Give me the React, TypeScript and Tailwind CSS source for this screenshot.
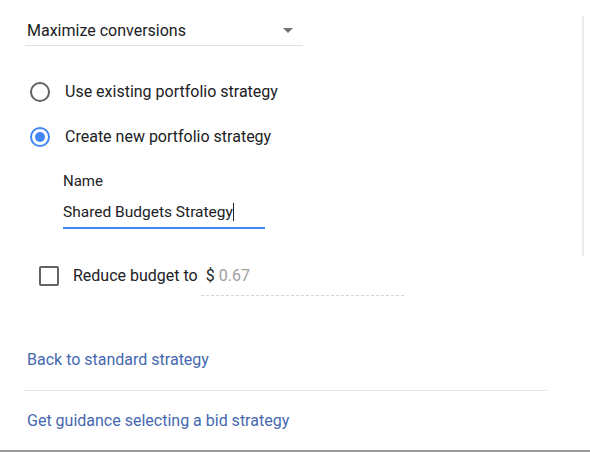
export default function App() {
  return (
    <div className="relative w-[590px] h-[452px] bg-white overflow-hidden font-['Roboto','Liberation_Sans',sans-serif] text-[#202124]">
      {/* right scroll edge */}
      <div className="absolute right-[6px] top-[16px] h-[240px] w-[2px] bg-[#ececec]" />

      <div className="pl-[25px] pt-[16px]">
        {/* strategy select */}
        <div className="flex items-center justify-between w-[278px] h-[30px] border-b border-[#e0e0e0] pl-[2px] pr-[10px]">
          <span className="text-[16px] leading-[24px]">Maximize conversions</span>
          <svg width="10" height="5" viewBox="0 0 10 5">
            <path d="M0 0h10L5 5z" fill="#757575" />
          </svg>
        </div>

        {/* radios */}
        <div className="mt-[34px] flex flex-col gap-[21px]">
          <label className="flex items-center gap-[15px] h-[24px] pl-[5px]">
            <span className="w-[20px] h-[20px] rounded-full border-2 border-[#5f6368]" />
            <span className="text-[16px] leading-[24px]">Use existing portfolio strategy</span>
          </label>
          <label className="flex items-center gap-[15px] h-[24px] pl-[5px]">
            <span className="flex items-center justify-center w-[20px] h-[20px] rounded-full border-2 border-[#4285f4]">
              <span className="w-[10px] h-[10px] rounded-full bg-[#4285f4]" />
            </span>
            <span className="text-[16px] leading-[24px]">Create new portfolio strategy</span>
          </label>
        </div>

        {/* name field */}
        <div className="ml-[38px] mt-[22px] w-[202px]">
          <div className="text-[15px] leading-[20px]">Name</div>
          <div className="mt-[11px] h-[27px] border-b-2 border-[#4285f4] flex items-start">
            <span className="text-[15.5px] leading-[20px]">Shared Budgets Strategy</span>
            <span className="mt-[1px] w-px h-[18px] bg-[#202124]" />
          </div>
        </div>

        {/* reduce budget */}
        <div className="mt-[35px] flex items-start pl-[14px]">
          <span className="mt-[2px] w-[20px] h-[20px] rounded-[2px] border-2 border-[#5f6368]" />
          <span className="ml-[14px] text-[16px] leading-[24px]">Reduce budget to</span>
          <div className="ml-[3px] w-[203px] h-[32px] border-b border-dashed border-[#d6d6d6] pl-[5px] flex items-start">
            <span className="text-[16px] leading-[24px]">$</span>
            <span className="ml-[4px] text-[16px] leading-[24px] text-[#a0a0a0]">0.67</span>
          </div>
        </div>

        {/* links */}
        <div className="mt-[52px] pl-[2px] text-[16px] leading-[24px] text-[#4668b0]">Back to standard strategy</div>
        <div className="mt-[18px] -ml-[2px] w-[524px] h-px bg-[#e6e6e6]" />
        <div className="mt-[18px] pl-[2px] text-[16px] leading-[24px] text-[#4668b0]">Get guidance selecting a bid strategy</div>
      </div>

      {/* bottom edge */}
      <div className="absolute left-0 right-0 bottom-0 h-[2px] bg-[#9a9a9a]" />
    </div>
  );
}
